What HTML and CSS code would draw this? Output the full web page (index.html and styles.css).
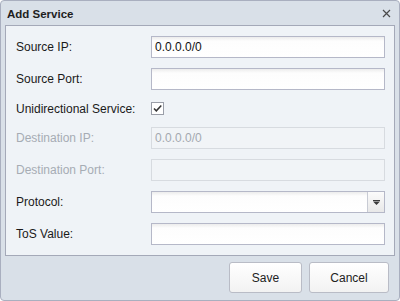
FILE: index.html
```html
<!DOCTYPE html>
<html>
<head>
<meta charset="utf-8">
<link rel="stylesheet" href="styles.css">
</head>
<body>
<div class="window">
  <div class="header">
    <span class="title">Add Service</span>
    <svg class="close" width="9" height="9" viewBox="0 0 9 9"><path d="M1 1 L8 8 M8 1 L1 8" stroke="#4a4a4a" stroke-width="1.2" fill="none"/></svg>
  </div>
  <div class="body">
    <div class="row">
      <label class="label">Source IP:</label>
      <div class="input">0.0.0.0/0</div>
    </div>
    <div class="row">
      <label class="label">Source Port:</label>
      <div class="input"></div>
    </div>
    <div class="row row-check">
      <label class="label">Unidirectional Service:</label>
      <div class="check">
        <svg width="11" height="11" viewBox="0 0 11 11"><path d="M2 5.5 L4.3 7.8 L9.3 2.5" stroke="#333" stroke-width="1.5" fill="none"/></svg>
      </div>
    </div>
    <div class="row disabled">
      <label class="label">Destination IP:</label>
      <div class="input">0.0.0.0/0</div>
    </div>
    <div class="row disabled">
      <label class="label">Destination Port:</label>
      <div class="input"></div>
    </div>
    <div class="row">
      <label class="label">Protocol:</label>
      <div class="input combo">
        <span class="combo-text"></span>
        <span class="trigger"><svg width="7" height="5" viewBox="0 0 7 5"><path d="M0 0 H7 V1 H0 Z M0 1.5 H7 L3.5 5 Z" fill="#3a3a3a"/></svg></span>
      </div>
    </div>
    <div class="row">
      <label class="label">ToS Value:</label>
      <div class="input"></div>
    </div>
  </div>
  <div class="footer">
    <button class="btn btn-save">Save</button>
    <button class="btn btn-cancel">Cancel</button>
  </div>
</div>
</body>
</html>
```
FILE: styles.css
```css
html, body {
  margin: 0;
  padding: 0;
  background: #ffffff;
}
.window {
  width: 400px;
  height: 301px;
  box-sizing: border-box;
  border: 1px solid #a9afbf;
  border-radius: 4px;
  background: #d9e0e8;
  display: flex;
  flex-direction: column;
  font-family: "Liberation Sans", Arial, sans-serif;
  font-size: 12px;
  color: #222;
}
.header {
  height: 24px;
  display: flex;
  align-items: center;
  justify-content: space-between;
  padding: 0 8px 0 6px;
}
.title {
  font-weight: bold;
  font-size: 11.5px;
  color: #1e1e1e;
  padding-top: 1px;
}
.body {
  margin: 0 4px;
  height: 231px;
  box-sizing: border-box;
  border: 1px solid #a4a9b8;
  background: #eff3f7;
  padding: 10px 9px 0 10px;
  display: flex;
  flex-direction: column;
}
.row {
  display: grid;
  grid-template-columns: 135px 1fr;
  align-items: center;
  height: 22px;
  margin-bottom: 10px;
}
.row-check {
  height: 17px;
}
.label {
  color: #1a1a1a;
  white-space: nowrap;
}
.input {
  height: 22px;
  box-sizing: border-box;
  border: 1px solid #b5b8c8;
  background: linear-gradient(#ececec 0, #fdfdfd 4px, #ffffff 100%);
  padding: 0 3px;
  display: flex;
  align-items: center;
  color: #111;
}
.disabled .label {
  color: #a6acb4;
}
.disabled .input {
  border-color: #d7dbe0;
  background: #f1f4f7;
  color: #a4a9b0;
}
.check {
  width: 13px;
  height: 13px;
  box-sizing: border-box;
  border: 1px solid #9a9ea8;
  background: #fff;
  display: flex;
  align-items: center;
  justify-content: center;
}
.combo {
  padding: 0;
}
.combo-text {
  flex: 1;
}
.trigger {
  width: 16px;
  height: 20px;
  border-left: 1px solid #c8cbd4;
  background: linear-gradient(#fbfbfb, #e8e8e8);
  display: flex;
  align-items: center;
  justify-content: center;
}
.footer {
  flex: 1;
  display: flex;
  justify-content: flex-end;
  align-items: flex-start;
  padding: 6px 10px 0 0;
  gap: 7px;
}
.btn {
  height: 31px;
  box-sizing: border-box;
  border: 1px solid #b9bcc6;
  border-radius: 3px;
  background: linear-gradient(#ffffff, #f2f2f2);
  font-family: "Liberation Sans", Arial, sans-serif;
  font-size: 12px;
  color: #222;
  padding: 0;
}
.btn-save {
  width: 73px;
}
.btn-cancel {
  width: 80px;
}
```
